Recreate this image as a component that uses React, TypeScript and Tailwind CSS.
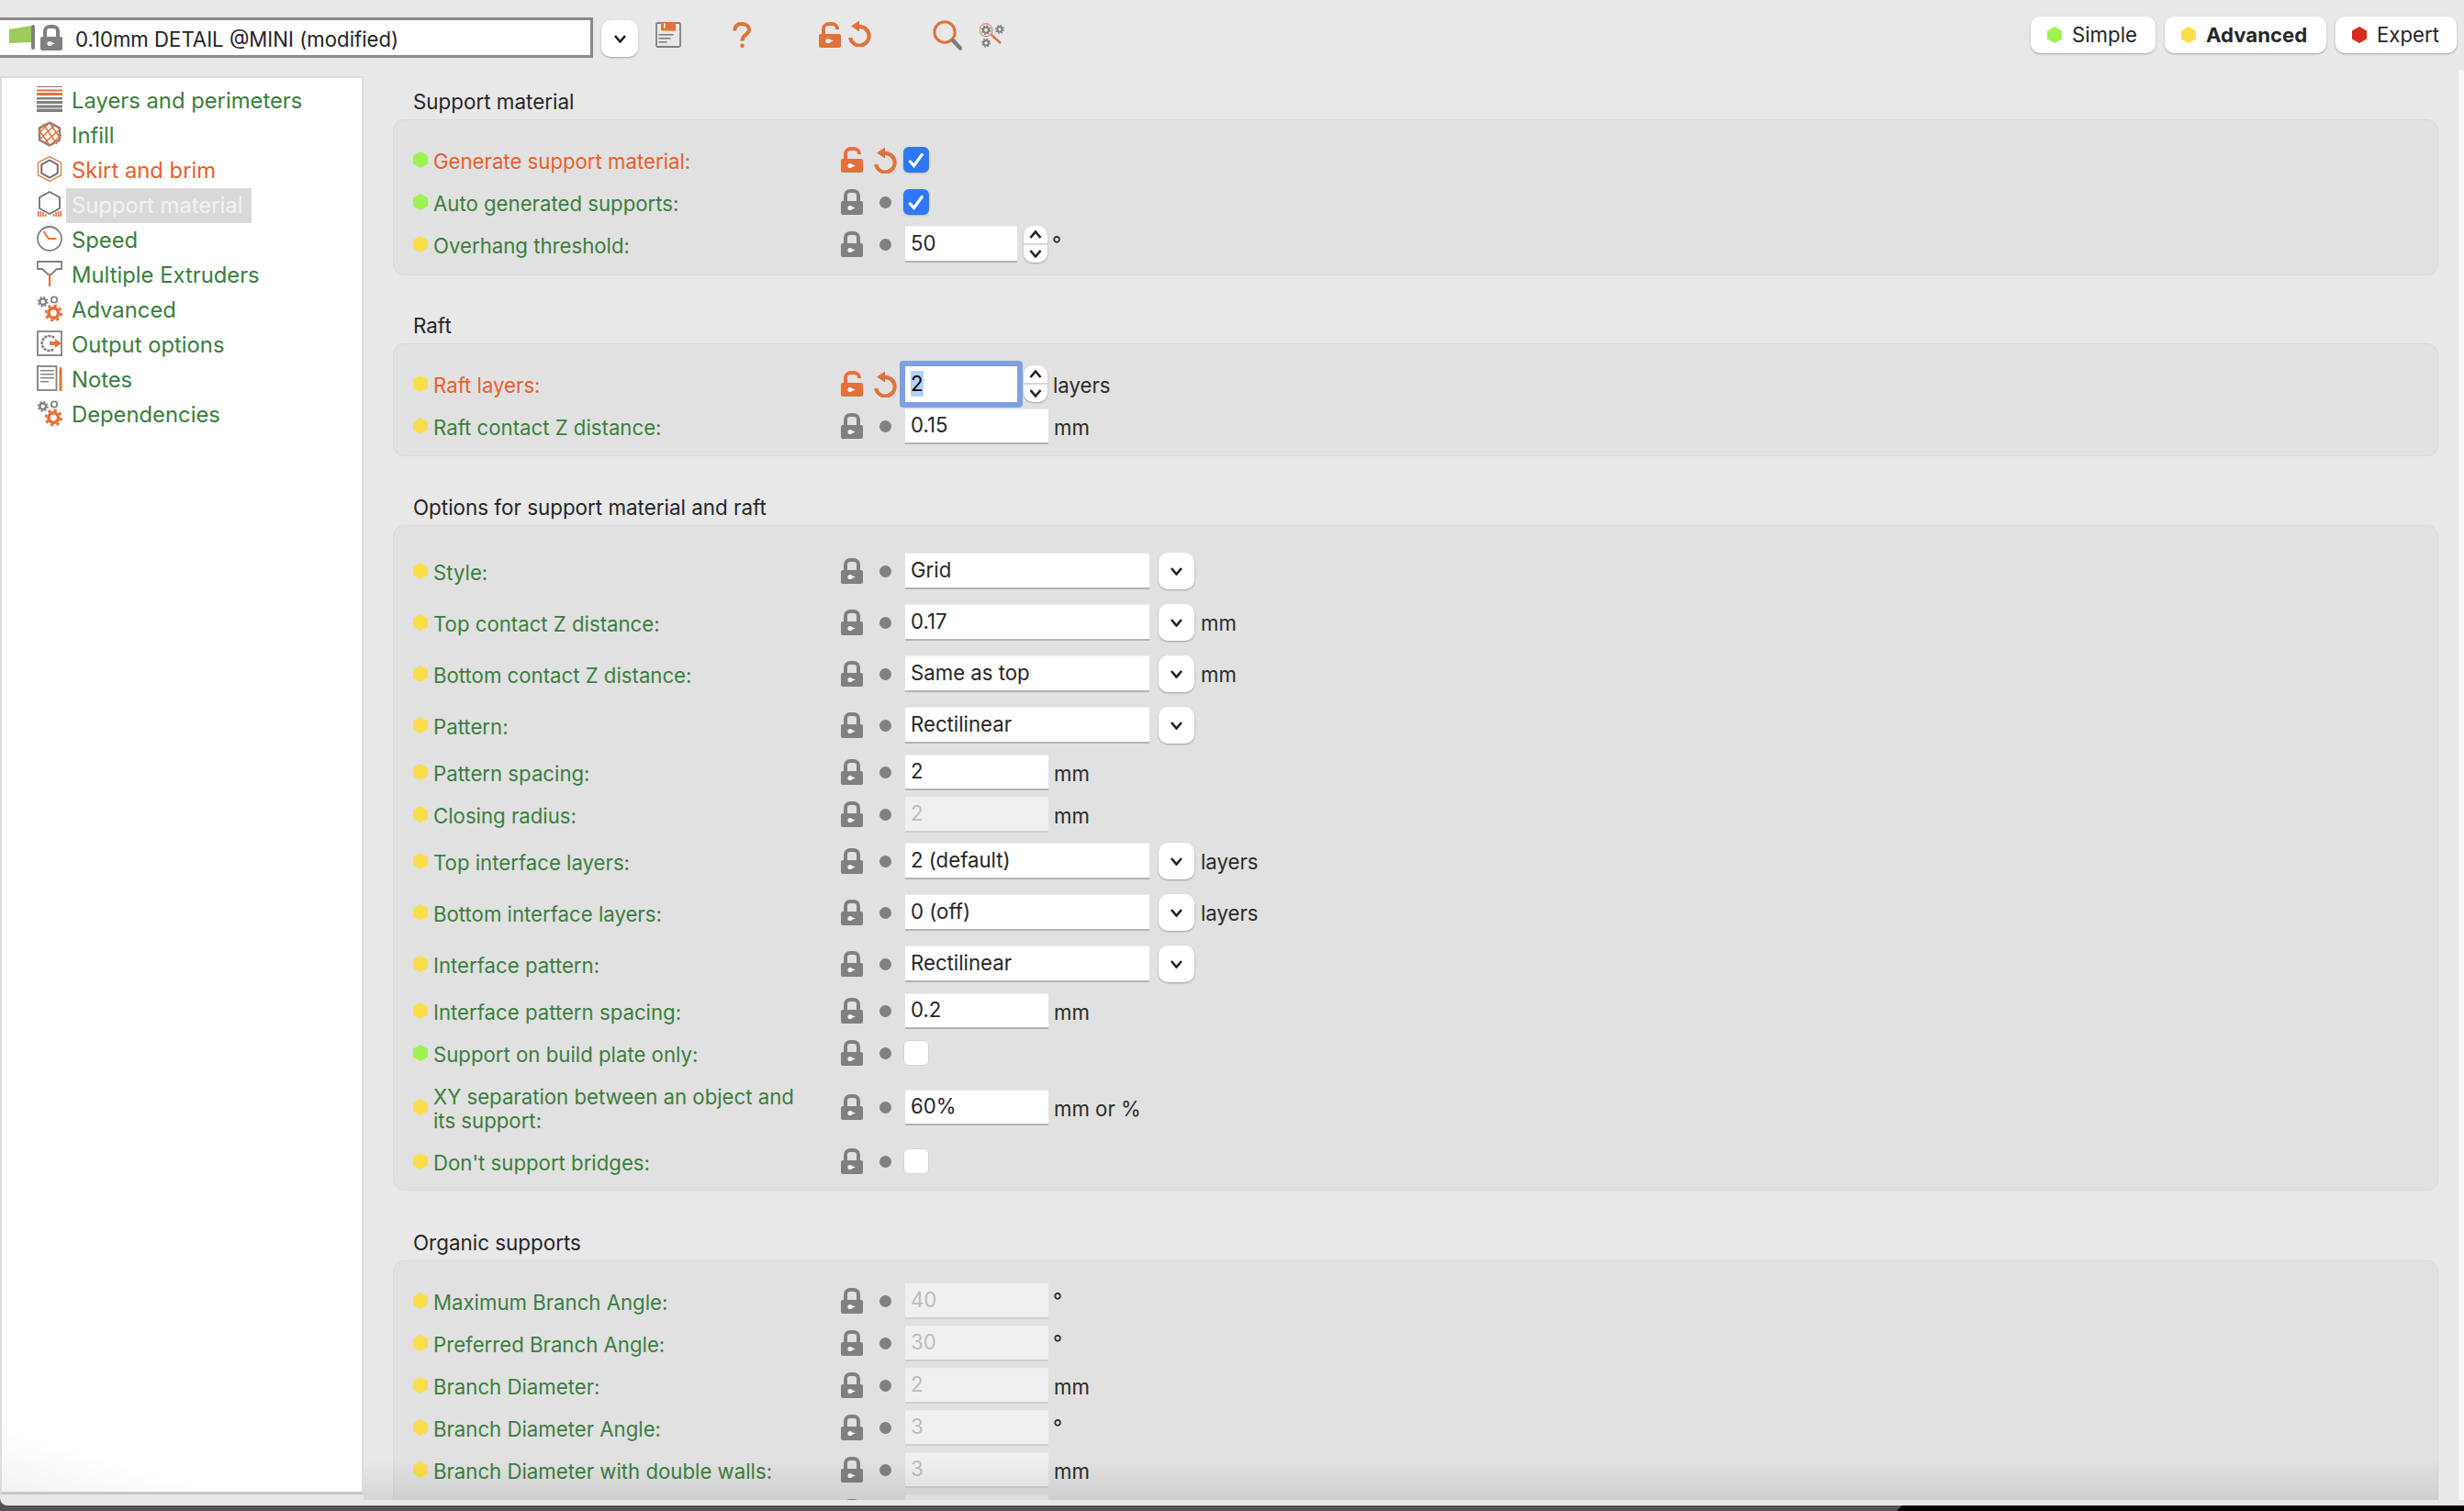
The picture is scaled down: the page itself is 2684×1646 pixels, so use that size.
import React from "react";

const ORANGE = "#e2723a";
const GRAY = "#808080";

function Hex({ color, className }: { color: string; className: string }) {
  return (
    <svg viewBox="0 0 16 18" className={className}>
      <polygon points="8,0 16,4.5 16,13.5 8,18 0,13.5 0,4.5" fill={color} />
    </svg>
  );
}

function Lock({ open = false, className = "w-[24px] h-[28px] shrink-0" }: { open?: boolean; className?: string }) {
  const c = open ? ORANGE : GRAY;
  return (
    <svg viewBox="0 0 24 28" className={className}>
      {open ? (
        <path d="M5 14 V7 a6 5.5 0 0 1 6-5 h3 a6 5.5 0 0 1 6 5 V8" fill="none" stroke={c} strokeWidth="4" />
      ) : (
        <path d="M5 14 V7 a5 5 0 0 1 5-5 h4 a5 5 0 0 1 5 5 V14" fill="none" stroke={c} strokeWidth="4" />
      )}
      <rect x="0" y="13" width="24" height="15" rx="2" fill={c} />
      <circle cx="10" cy="20.5" r="2.6" fill="#f2f2f2" />
      <polygon points="11,18.8 16,20.5 11,22.2" fill="#f2f2f2" />
    </svg>
  );
}

function Undo({ className = "w-[25px] h-[29px] shrink-0" }: { className?: string }) {
  return (
    <svg viewBox="0 0 25 29" className={className}>
      <path d="M11 7 A10.3 10.3 0 1 1 2.2 19" fill="none" stroke={ORANGE} strokeWidth="4.2" />
      <polygon points="3,6.5 12,0.5 12,12.5" fill={ORANGE} />
    </svg>
  );
}

function Chevron({ up = false, className = "w-[13px] h-[9px]" }: { up?: boolean; className?: string }) {
  return (
    <svg viewBox="0 0 13 9" className={className}>
      <polyline points={up ? "1,8 6.5,1.5 12,8" : "1,1 6.5,7.5 12,1"} fill="none" stroke="#222" strokeWidth="2.6" />
    </svg>
  );
}

function Gear({ cx, cy, r, color }: { cx: number; cy: number; r: number; color: string }) {
  const outer = r * 1.12;
  const dash = (2 * Math.PI * outer) / 16;
  return (
    <g>
      <circle cx={cx} cy={cy} r={r * 0.72} fill="none" stroke={color} strokeWidth={r * 0.5} />
      <circle cx={cx} cy={cy} r={outer} fill="none" stroke={color} strokeWidth={r * 0.36} strokeDasharray={`${dash} ${dash}`} />
    </g>
  );
}

const side = "w-[28px] h-[28px] shrink-0 mb-1";

function IconLayers() {
  return (
    <svg viewBox="0 0 28 28" className={side}>
      <rect y="0" width="28" height="1" fill={GRAY} />
      <rect y="3.5" width="28" height="2" fill={ORANGE} />
      <rect y="7" width="28" height="3" fill={ORANGE} />
      <rect y="12" width="28" height="2.5" fill={GRAY} />
      <rect y="16" width="28" height="3" fill={GRAY} />
      <rect y="20.5" width="28" height="3" fill={GRAY} />
      <rect y="24.5" width="28" height="3.5" fill={GRAY} />
    </svg>
  );
}
function IconInfill() {
  return (
    <svg viewBox="0 0 28 28" className={side}>
      <polygon points="14,1.5 25,7.5 25,20.5 14,26.5 3,20.5 3,7.5" fill="none" stroke={GRAY} strokeWidth="2.4" />
      <g stroke={ORANGE} strokeWidth="1.5">
        <line x1="2" y1="13" x2="14" y2="2" />
        <line x1="3" y1="20" x2="20" y2="4" />
        <line x1="8" y1="24" x2="26" y2="8" />
        <line x1="15" y1="26" x2="27" y2="15" />
        <line x1="7" y1="3" x2="22" y2="25" />
        <line x1="14" y1="2" x2="26" y2="19" />
        <line x1="2" y1="9" x2="14" y2="26" />
      </g>
    </svg>
  );
}
function IconSkirt() {
  return (
    <svg viewBox="0 0 28 28" className={side}>
      <polygon points="14,0.6 26.5,7.2 26.5,20.8 14,27.4 1.5,20.8 1.5,7.2" fill="none" stroke={ORANGE} strokeWidth="1.2" />
      <polygon points="14,4.5 22.8,9.4 22.8,18.6 14,23.5 5.2,18.6 5.2,9.4" fill="none" stroke="#707070" strokeWidth="2" />
    </svg>
  );
}
function IconSupport() {
  return (
    <svg viewBox="0 0 28 28" className={side}>
      <polygon points="14,1 25,7 25,19 14,25 3,19 3,7" fill="none" stroke="#707070" strokeWidth="1.8" />
      <g fill={ORANGE}>
        <rect x="1" y="22" width="1.6" height="6" />
        <rect x="3.6" y="22" width="1.6" height="6" />
        <rect x="6.2" y="23" width="1.6" height="5" />
        <rect x="8.8" y="25" width="1.6" height="3" />
        <rect x="17.6" y="25" width="1.6" height="3" />
        <rect x="20.2" y="23" width="1.6" height="5" />
        <rect x="22.8" y="22" width="1.6" height="6" />
        <rect x="25.4" y="22" width="1.6" height="6" />
      </g>
    </svg>
  );
}
function IconSpeed() {
  return (
    <svg viewBox="0 0 28 28" className={side}>
      <circle cx="14" cy="14" r="13" fill="none" stroke={GRAY} strokeWidth="1.8" />
      <path d="M7.5 6 L13 14 H21.5" fill="none" stroke={ORANGE} strokeWidth="2" />
    </svg>
  );
}
function IconExtruder() {
  return (
    <svg viewBox="0 0 28 28" className={side}>
      <path d="M1 9 V1 H27 V9 H22 L15.5 15 H12.5 L6 9 Z" fill="none" stroke={GRAY} strokeWidth="1.8" />
      <rect x="13" y="14" width="2.2" height="14" fill={ORANGE} />
    </svg>
  );
}
function IconGears() {
  return (
    <svg viewBox="0 0 28 28" className={side}>
      <Gear cx={6.7} cy={6.7} r={4.6} color={GRAY} />
      <circle cx="19" cy="4.5" r="3.2" fill="none" stroke={GRAY} strokeWidth="1.8" />
      <Gear cx={18.3} cy={19} r={7.4} color={ORANGE} />
    </svg>
  );
}
function IconOutput() {
  return (
    <svg viewBox="0 0 28 28" className={side}>
      <rect x="1" y="1" width="26" height="26" fill="none" stroke={GRAY} strokeWidth="1.8" />
      <path d="M19 8 A8 8 0 1 0 19 20" fill="none" stroke={GRAY} strokeWidth="2.6" strokeDasharray="3 1" />
      <rect x="14" y="12" width="8" height="4" fill={ORANGE} />
      <polygon points="20,9 27,14 20,19" fill={ORANGE} />
    </svg>
  );
}
function IconNotes() {
  return (
    <svg viewBox="0 0 28 28" className={side}>
      <rect x="1" y="1" width="20.5" height="26" fill="none" stroke={GRAY} strokeWidth="1.8" />
      <g fill={GRAY}>
        <rect x="4" y="5" width="15" height="1.4" />
        <rect x="4" y="9" width="15" height="1.4" />
        <rect x="4" y="13" width="15" height="1.4" />
        <rect x="4" y="17" width="9" height="1.4" />
      </g>
      <polygon points="24.5,4 26,0.5 27.5,4 27.5,28 24.5,28" fill={ORANGE} />
    </svg>
  );
}

const navItems: { label: string; icon: React.ReactNode; tone?: "orange" | "sel" }[] = [
  { label: "Layers and perimeters", icon: <IconLayers /> },
  { label: "Infill", icon: <IconInfill /> },
  { label: "Skirt and brim", icon: <IconSkirt />, tone: "orange" },
  { label: "Support material", icon: <IconSupport />, tone: "sel" },
  { label: "Speed", icon: <IconSpeed /> },
  { label: "Multiple Extruders", icon: <IconExtruder /> },
  { label: "Advanced", icon: <IconGears /> },
  { label: "Output options", icon: <IconOutput /> },
  { label: "Notes", icon: <IconNotes /> },
  { label: "Dependencies", icon: <IconGears /> },
];

type RowT = {
  label: string;
  level?: "g" | "y";
  mod?: boolean;
  kind: "check" | "input" | "combo" | "spin";
  value?: string;
  checked?: boolean;
  unit?: string;
  disabled?: boolean;
  focused?: boolean;
  h?: string;
};

function Field({ r }: { r: RowT }) {
  if (r.kind === "check") {
    return r.checked ? (
      <div className="-ml-[2px] w-[28px] h-[28px] rounded-[6px] bg-[#2f78f5] flex items-center justify-center shadow-[0_1px_2px_rgba(0,0,0,0.2)]">
        <svg viewBox="0 0 20 20" className="w-[20px] h-[20px]">
          <polyline points="2.5,11 7.5,16.5 17,3.5" fill="none" stroke="#fff" strokeWidth="3.2" />
        </svg>
      </div>
    ) : (
      <div className="-ml-[2px] w-[28px] h-[28px] rounded-[6px] bg-white border border-[#d4d4d4]" />
    );
  }
  const base = "box-border flex items-center pl-[6px] pb-[2px] border-b-[2px] border-t border-t-[#ececec]";
  const tone = r.disabled ? "bg-[#f0f0f0] text-[#bcbcbc] border-b-[#cfcfcf]" : "bg-white text-[#262626] border-b-[#b4b4b4]";
  if (r.kind === "combo") {
    return (
      <div className="flex items-center gap-[10px]">
        <div className={`${base} ${tone} w-[266px] h-[40px]`}>{r.value}</div>
        <div className="w-[39px] h-[40px] rounded-[10px] bg-white flex items-center justify-center shadow-[0_1px_2px_rgba(0,0,0,0.3)]">
          <Chevron />
        </div>
      </div>
    );
  }
  if (r.kind === "spin") {
    return (
      <div className="flex items-center gap-[7px]">
        {r.focused ? (
          <div className="rounded-[4px] p-[6px] -m-[6px] bg-[#7f9fe3]">
            <div className="box-border flex items-center pl-[6px] bg-white text-black w-[122px] h-[39px]">
              <span className="bg-[#b4d1f8] h-[28px] w-[14px] flex items-center leading-none">{r.value}</span>
            </div>
          </div>
        ) : (
          <div className={`${base} ${tone} w-[122px] h-[40px]`}>{r.value}</div>
        )}
        <div className="w-[26px] h-[40px] rounded-[10px] bg-white flex flex-col items-center justify-between py-[5px] relative shadow-[0_1px_2px_rgba(0,0,0,0.3)]">
          <Chevron up className="w-[14px] h-[9px]" />
          <div className="absolute left-0 right-0 top-[19px] h-[2px] bg-[#d8d8d8]" />
          <Chevron className="w-[14px] h-[9px]" />
        </div>
      </div>
    );
  }
  return <div className={`${base} ${tone} w-[156px] h-[39px]`}>{r.value}</div>;
}

function Row({ r }: { r: RowT }) {
  const color = r.level === "g" ? "#9ef252" : "#fade4a";
  const unitClass = r.unit === "°" ? "-mt-[1px] ml-[5px]" : r.kind === "combo" ? "mt-[2px] ml-[7px]" : "mt-[4px] ml-[6px]";
  return (
    <div className={`flex items-center pl-[21px] ${r.h ?? "h-[46px]"}`}>
      <Hex color={color} className="w-[16px] h-[18px] shrink-0" />
      <div className={`ml-[6px] w-[444px] pt-[4px] pr-[44px] min-h-[26px] leading-[26px] shrink-0 ${r.mod ? "text-[#ea5f2b]" : "text-[#3b7e3e]"}`}>{r.label}</div>
      <Lock open={r.mod} />
      <div className="ml-[12px] w-[25px] flex items-center justify-center shrink-0">
        {r.mod ? <Undo /> : <div className="w-[13px] h-[13px] rounded-full bg-[#808080]" />}
      </div>
      <div className="ml-[9px]">
        <Field r={r} />
      </div>
      {r.unit && <div className={`text-[#2b2b2b] ${unitClass}`}>{r.unit}</div>}
    </div>
  );
}

function Section({ title, rows, className, panel }: { title: string; rows: RowT[]; className: string; panel: string }) {
  return (
    <section className={className}>
      <div className="h-[40px] flex items-center pl-[22px] pt-[2px] text-[22.4px] text-[#262626]">{title}</div>
      <div className={`rounded-[12px] border border-[#d9d9d9] bg-[#e1e1e1] ${panel}`}>
        {rows.map((r, i) => (
          <Row key={i} r={r} />
        ))}
      </div>
    </section>
  );
}

const s1: RowT[] = [
  { label: "Generate support material:", level: "g", mod: true, kind: "check", checked: true },
  { label: "Auto generated supports:", level: "g", kind: "check", checked: true },
  { label: "Overhang threshold:", kind: "spin", value: "50", unit: "°" },
];
const s2: RowT[] = [
  { label: "Raft layers:", mod: true, kind: "spin", value: "2", unit: "layers", focused: true },
  { label: "Raft contact Z distance:", kind: "input", value: "0.15", unit: "mm" },
];
const h56 = "h-[56px]";
const s3: RowT[] = [
  { label: "Style:", kind: "combo", value: "Grid", h: h56 },
  { label: "Top contact Z distance:", kind: "combo", value: "0.17", unit: "mm", h: h56 },
  { label: "Bottom contact Z distance:", kind: "combo", value: "Same as top", unit: "mm", h: h56 },
  { label: "Pattern:", kind: "combo", value: "Rectilinear", h: h56 },
  { label: "Pattern spacing:", kind: "input", value: "2", unit: "mm" },
  { label: "Closing radius:", kind: "input", value: "2", unit: "mm", disabled: true },
  { label: "Top interface layers:", kind: "combo", value: "2 (default)", unit: "layers", h: h56 },
  { label: "Bottom interface layers:", kind: "combo", value: "0 (off)", unit: "layers", h: h56 },
  { label: "Interface pattern:", kind: "combo", value: "Rectilinear", h: h56 },
  { label: "Interface pattern spacing:", kind: "input", value: "0.2", unit: "mm" },
  { label: "Support on build plate only:", level: "g", kind: "check" },
  { label: "XY separation between an object and its support:", kind: "input", value: "60%", unit: "mm or %", h: "h-[72px]" },
  { label: "Don't support bridges:", kind: "check" },
];
const s4: RowT[] = [
  { label: "Maximum Branch Angle:", kind: "input", value: "40", unit: "°", disabled: true },
  { label: "Preferred Branch Angle:", kind: "input", value: "30", unit: "°", disabled: true },
  { label: "Branch Diameter:", kind: "input", value: "2", unit: "mm", disabled: true },
  { label: "Branch Diameter Angle:", kind: "input", value: "3", unit: "°", disabled: true },
  { label: "Branch Diameter with double walls:", kind: "input", value: "3", unit: "mm", disabled: true },
  { label: "", kind: "input", value: "", disabled: true },
];

function ModeButton({ color, label, width, bold }: { color: string; label: string; width: string; bold?: boolean }) {
  return (
    <div className={`${width} h-[40px] rounded-[10px] bg-white flex items-center pl-[18px] gap-[11px] shadow-[0_1px_2px_rgba(0,0,0,0.3)] text-[#272727] ${bold ? "font-bold" : ""}`}>
      <Hex color={color} className="w-[16px] h-[18px] shrink-0" />
      {label}
    </div>
  );
}

export default function App() {
  return (
    <div className="w-[2684px] h-[1646px] relative overflow-hidden bg-[#545454] text-[22.2px] font-['Inter','Liberation_Sans',sans-serif]">
      <div className="h-[1640px] flex flex-col bg-[#e8e8e8] rounded-bl-[8px] overflow-hidden">
        <header className="h-[76px] flex items-start shrink-0">
          <div className="w-[646px] h-[44px] mt-[19px] box-border bg-white border-y-[3px] border-r-[3px] border-[#8a8a8a] flex items-center pl-[10px]">
            <svg viewBox="0 0 28 28" className="w-[28px] h-[28px] shrink-0">
              <polygon points="0,5 24,1 24,19 0,20" fill="#9ccb59" />
              <rect x="24" y="0" width="4" height="27" rx="2" fill={GRAY} />
            </svg>
            <Lock className="ml-[6px] w-[24px] h-[28px] shrink-0" />
            <span className="ml-[14px] pt-[3px] text-[#242424]">0.10mm DETAIL @MINI (modified)</span>
          </div>
          <div className="ml-[9px] mt-[22px] w-[40px] h-[40px] rounded-[10px] bg-white flex items-center justify-center shadow-[0_1px_2px_rgba(0,0,0,0.3)]">
            <Chevron />
          </div>
          <svg viewBox="0 0 28 28" className="ml-[19px] mt-[24px] w-[28px] h-[28px] shrink-0">
            <rect x="1" y="1" width="26" height="26" rx="1.5" fill="none" stroke={GRAY} strokeWidth="1.8" />
            <rect x="6" y="0" width="16" height="9.5" rx="1" fill={ORANGE} />
            <rect x="9" y="1.5" width="1.6" height="5" fill="#fff" />
            <g fill={GRAY}>
              <rect x="3.5" y="13" width="16" height="1.6" />
              <rect x="3.5" y="17" width="13" height="1.6" />
              <rect x="3.5" y="21" width="9" height="1.6" />
            </g>
          </svg>
          <svg viewBox="0 0 20 28" className="ml-[56px] mt-[24px] w-[20px] h-[28px] shrink-0">
            <path d="M2.2 9.5 C2.2 4 5.5 2 10 2 C14.5 2 18 4.5 18 8.5 C18 13.5 10.5 13.5 10.5 20.5" fill="none" stroke={ORANGE} strokeWidth="4" />
            <circle cx="10.5" cy="25.7" r="2.3" fill={ORANGE} />
          </svg>
          <Lock open className="ml-[74px] mt-[24px] w-[24px] h-[28px] shrink-0" />
          <Undo className="ml-[8px] mt-[22px] w-[25px] h-[29px] shrink-0" />
          <svg viewBox="0 0 32 33" className="ml-[67px] mt-[22px] w-[32px] h-[33px] shrink-0">
            <circle cx="13" cy="13" r="11.2" fill="none" stroke={ORANGE} strokeWidth="3" />
            <line x1="21" y1="21" x2="23" y2="23" stroke={ORANGE} strokeWidth="3" />
            <line x1="22.5" y1="22.5" x2="30" y2="30.5" stroke="#7d7d7d" strokeWidth="4.5" strokeLinecap="round" />
          </svg>
          <svg viewBox="0 0 28 28" className="ml-[19px] mt-[24px] w-[28px] h-[28px] shrink-0">
            <Gear cx={7} cy={8.7} r={4.2} color="#7d7d7d" />
            <Gear cx={22} cy={8} r={3.8} color="#7d7d7d" />
            <Gear cx={7} cy={22.7} r={3.8} color="#7d7d7d" />
            <circle cx="7" cy="8.7" r="7" fill="none" stroke={ORANGE} strokeWidth="1" />
            <line x1="12.5" y1="13.5" x2="23" y2="23" stroke={ORANGE} strokeWidth="2.4" />
          </svg>
          <div className="flex-1" />
          <div className="mt-[18px] pr-[8px] flex gap-[10px]">
            <ModeButton color="#9ef252" label="Simple" width="w-[136px]" />
            <ModeButton color="#fade4a" label="Advanced" width="w-[176px]" bold />
            <ModeButton color="#d62d1f" label="Expert" width="w-[132px]" />
          </div>
        </header>
        <div className="flex h-[1558px] shrink-0">
          <aside className="relative w-[396px] h-[1545px] mt-[7px] shrink-0 box-border bg-white border-t-[2px] border-x-[2px] border-[#dcdcdc] border-b-[3px] border-b-[#c6c6c6] pt-[6px] pl-[38px] text-[23.8px]">
            {navItems.map((n) => (
              <div key={n.label} className="h-[38px] flex items-center">
                {n.icon}
                <div
                  className={`ml-[4px] h-[38px] flex items-center pl-[6px] pr-[10px] ${
                    n.tone === "sel" ? "bg-[#d9d9d9] text-[#f2f2f2]" : n.tone === "orange" ? "text-[#ea5f2b]" : "text-[#3b7e3e]"
                  }`}
                >
                  {n.label}
                </div>
              </div>
            ))}
            <div className="absolute left-0 bottom-0 w-[240px] h-[70px] bg-linear-to-tr from-black/5 to-transparent to-50%" />
          </aside>
          <main className="relative flex-1 h-[1558px] overflow-hidden pl-[32px] pr-[28px]">
            <Section title="Support material" rows={s1} className="mt-[14px]" panel="pt-5 pb-[10px]" />
            <Section title="Raft" rows={s2} className="mt-[34px]" panel="pt-5 pb-[9px]" />
            <Section title="Options for support material and raft" rows={s3} className="mt-[35px]" panel="pt-[21px] pb-[8px]" />
            <Section title="Organic supports" rows={s4} className="mt-[36px]" panel="pt-5 pb-[10px]" />
            <div className="absolute left-0 right-[28px] bottom-0 h-[44px] pointer-events-none bg-linear-to-b from-transparent to-black/[0.08]" />
            <div className="absolute right-0 top-0 bottom-0 w-[6px] bg-[#f7f7f7]" />
          </main>
        </div>
      </div>
      <div className="h-[6px] flex">
        <div className="w-[2066px]" />
        <div className="flex-1 bg-black [clip-path:polygon(6px_0,100%_0,100%_100%,0_100%)]" />
      </div>
    </div>
  );
}
